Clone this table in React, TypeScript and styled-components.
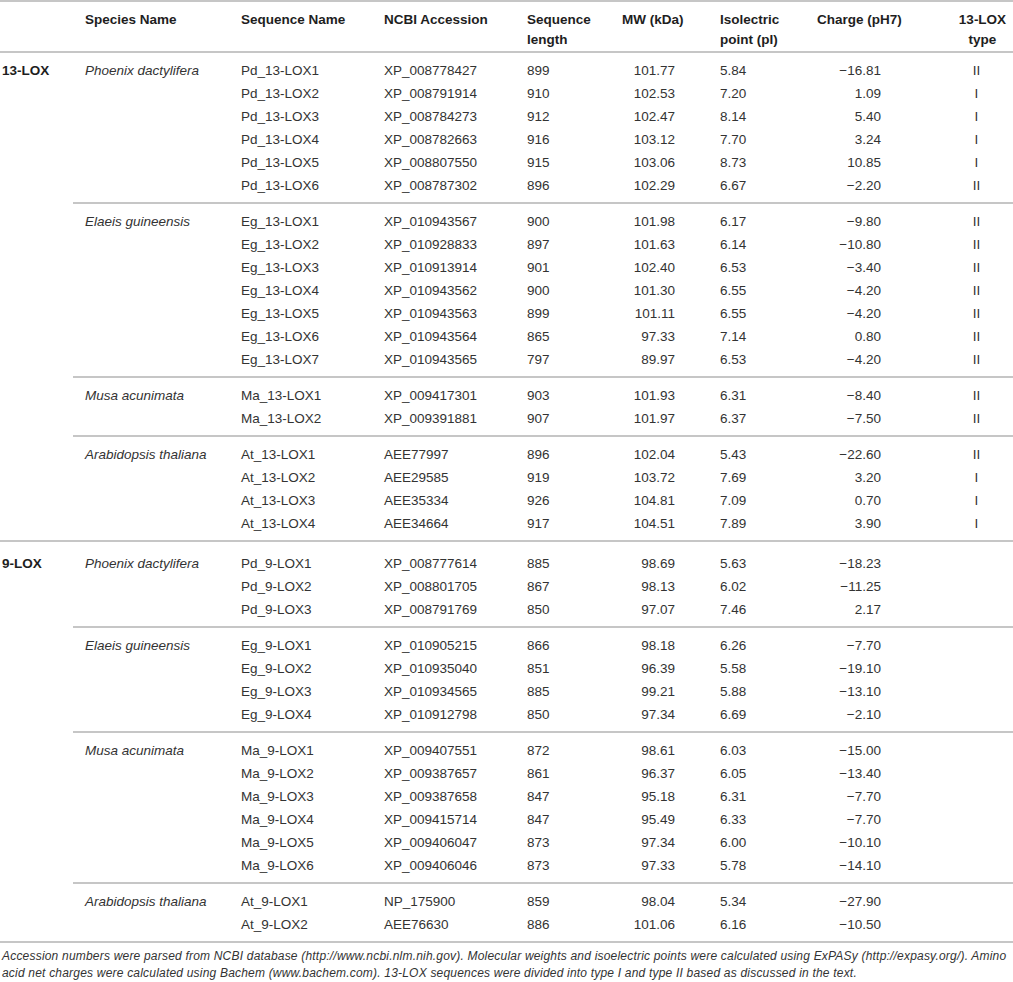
import React from "react";
import styled, { createGlobalStyle } from "styled-components";

const Global = createGlobalStyle`
  html, body { margin: 0; padding: 0; background: #ffffff; }
  body { font-family: "Liberation Sans", Arial, sans-serif; color: #333; }
`;

const COLS = "143px 143px 95px 98px 97px 135px 73px";
const LINE = "#c6c6c6";

const Page = styled.div`
  width: 1013px;
`;

const Table = styled.div`
  border-top: 2px solid ${LINE};
  border-bottom: 2px solid ${LINE};
`;

const HeaderRow = styled.div`
  display: grid;
  grid-template-columns: 73px 156px ${COLS};
  padding: 8px 0 1px;
  border-bottom: 2px solid ${LINE};
`;

const HeadCell = styled.div<{ $center?: boolean; $first?: boolean }>`
  font-weight: bold;
  font-size: 13.5px;
  line-height: 20px;
  color: #1e1e1e;
  padding-left: ${(p) => (p.$first ? "2px" : "12px")};
  text-align: ${(p) => (p.$center ? "center" : "left")};
  white-space: nowrap;
`;

const Section = styled.div<{ $divided?: boolean }>`
  display: grid;
  grid-template-columns: 73px 1fr;
  border-top: ${(p) => (p.$divided ? `2px solid ${LINE}` : "none")};
  padding-top: ${(p) => (p.$divided ? "4px" : "0")};
`;

const Category = styled.div`
  font-weight: bold;
  font-size: 13.5px;
  line-height: 23px;
  color: #1e1e1e;
  padding: 5.5px 0 0 2px;
`;

const Groups = styled.div`
  display: flex;
  flex-direction: column;
`;

const Group = styled.div<{ $divided?: boolean }>`
  display: grid;
  grid-template-columns: 156px 1fr;
  padding: 5.5px 0;
  border-top: ${(p) => (p.$divided ? `2px solid ${LINE}` : "none")};
`;

const Species = styled.div`
  font-style: italic;
  font-size: 13.5px;
  line-height: 23px;
  padding-left: 12px;
  color: #333;
  white-space: nowrap;
`;

const Rows = styled.div`
  display: flex;
  flex-direction: column;
`;

const Row = styled.div`
  display: grid;
  grid-template-columns: ${COLS};
  font-size: 13.5px;
  line-height: 23px;
  color: #333;
`;

const Cell = styled.div<{ $align?: "left" | "right" | "center"; $pr?: number }>`
  padding-left: ${(p) => (p.$align === "left" || !p.$align ? "12px" : "0")};
  padding-right: ${(p) => (p.$pr ? `${p.$pr}px` : "0")};
  text-align: ${(p) => p.$align || "left"};
  white-space: nowrap;
`;

const Footnote = styled.p`
  margin: 0;
  padding: 5px 0 0 2px;
  font-style: italic;
  font-size: 12px;
  letter-spacing: 0.2px;
  line-height: 17px;
  color: #333;
  white-space: nowrap;
`;

type R = [string, string, string, string, string, string, string];
type G = { species: string; rows: R[] };
type S = { label: string; groups: G[] };

const data: S[] = [
  {
    label: "13-LOX",
    groups: [
      {
        species: "Phoenix dactylifera",
        rows: [
          ["Pd_13-LOX1", "XP_008778427", "899", "101.77", "5.84", "−16.81", "II"],
          ["Pd_13-LOX2", "XP_008791914", "910", "102.53", "7.20", "1.09", "I"],
          ["Pd_13-LOX3", "XP_008784273", "912", "102.47", "8.14", "5.40", "I"],
          ["Pd_13-LOX4", "XP_008782663", "916", "103.12", "7.70", "3.24", "I"],
          ["Pd_13-LOX5", "XP_008807550", "915", "103.06", "8.73", "10.85", "I"],
          ["Pd_13-LOX6", "XP_008787302", "896", "102.29", "6.67", "−2.20", "II"],
        ],
      },
      {
        species: "Elaeis guineensis",
        rows: [
          ["Eg_13-LOX1", "XP_010943567", "900", "101.98", "6.17", "−9.80", "II"],
          ["Eg_13-LOX2", "XP_010928833", "897", "101.63", "6.14", "−10.80", "II"],
          ["Eg_13-LOX3", "XP_010913914", "901", "102.40", "6.53", "−3.40", "II"],
          ["Eg_13-LOX4", "XP_010943562", "900", "101.30", "6.55", "−4.20", "II"],
          ["Eg_13-LOX5", "XP_010943563", "899", "101.11", "6.55", "−4.20", "II"],
          ["Eg_13-LOX6", "XP_010943564", "865", "97.33", "7.14", "0.80", "II"],
          ["Eg_13-LOX7", "XP_010943565", "797", "89.97", "6.53", "−4.20", "II"],
        ],
      },
      {
        species: "Musa acunimata",
        rows: [
          ["Ma_13-LOX1", "XP_009417301", "903", "101.93", "6.31", "−8.40", "II"],
          ["Ma_13-LOX2", "XP_009391881", "907", "101.97", "6.37", "−7.50", "II"],
        ],
      },
      {
        species: "Arabidopsis thaliana",
        rows: [
          ["At_13-LOX1", "AEE77997", "896", "102.04", "5.43", "−22.60", "II"],
          ["At_13-LOX2", "AEE29585", "919", "103.72", "7.69", "3.20", "I"],
          ["At_13-LOX3", "AEE35334", "926", "104.81", "7.09", "0.70", "I"],
          ["At_13-LOX4", "AEE34664", "917", "104.51", "7.89", "3.90", "I"],
        ],
      },
    ],
  },
  {
    label: "9-LOX",
    groups: [
      {
        species: "Phoenix dactylifera",
        rows: [
          ["Pd_9-LOX1", "XP_008777614", "885", "98.69", "5.63", "−18.23", ""],
          ["Pd_9-LOX2", "XP_008801705", "867", "98.13", "6.02", "−11.25", ""],
          ["Pd_9-LOX3", "XP_008791769", "850", "97.07", "7.46", "2.17", ""],
        ],
      },
      {
        species: "Elaeis guineensis",
        rows: [
          ["Eg_9-LOX1", "XP_010905215", "866", "98.18", "6.26", "−7.70", ""],
          ["Eg_9-LOX2", "XP_010935040", "851", "96.39", "5.58", "−19.10", ""],
          ["Eg_9-LOX3", "XP_010934565", "885", "99.21", "5.88", "−13.10", ""],
          ["Eg_9-LOX4", "XP_010912798", "850", "97.34", "6.69", "−2.10", ""],
        ],
      },
      {
        species: "Musa acunimata",
        rows: [
          ["Ma_9-LOX1", "XP_009407551", "872", "98.61", "6.03", "−15.00", ""],
          ["Ma_9-LOX2", "XP_009387657", "861", "96.37", "6.05", "−13.40", ""],
          ["Ma_9-LOX3", "XP_009387658", "847", "95.18", "6.31", "−7.70", ""],
          ["Ma_9-LOX4", "XP_009415714", "847", "95.49", "6.33", "−7.70", ""],
          ["Ma_9-LOX5", "XP_009406047", "873", "97.34", "6.00", "−10.10", ""],
          ["Ma_9-LOX6", "XP_009406046", "873", "97.33", "5.78", "−14.10", ""],
        ],
      },
      {
        species: "Arabidopsis thaliana",
        rows: [
          ["At_9-LOX1", "NP_175900", "859", "98.04", "5.34", "−27.90", ""],
          ["At_9-LOX2", "AEE76630", "886", "101.06", "6.16", "−10.50", ""],
        ],
      },
    ],
  },
];

export default function App() {
  return (
    <Page>
      <Global />
      <Table>
        <HeaderRow>
          <HeadCell $first />
          <HeadCell>Species Name</HeadCell>
          <HeadCell>Sequence Name</HeadCell>
          <HeadCell>NCBI Accession</HeadCell>
          <HeadCell>
            Sequence
            <br />
            length
          </HeadCell>
          <HeadCell>MW (kDa)</HeadCell>
          <HeadCell>
            Isolectric
            <br />
            point (pI)
          </HeadCell>
          <HeadCell>Charge (pH7)</HeadCell>
          <HeadCell $center>
            13-LOX
            <br />
            type
          </HeadCell>
        </HeaderRow>
        {data.map((s, si) => (
          <Section key={s.label} $divided={si > 0}>
            <Category>{s.label}</Category>
            <Groups>
              {s.groups.map((g, gi) => (
                <Group key={g.species} $divided={gi > 0}>
                  <Species>{g.species}</Species>
                  <Rows>
                    {g.rows.map((r) => (
                      <Row key={r[0]}>
                        <Cell>{r[0]}</Cell>
                        <Cell>{r[1]}</Cell>
                        <Cell>{r[2]}</Cell>
                        <Cell $align="right" $pr={33}>
                          {r[3]}
                        </Cell>
                        <Cell>{r[4]}</Cell>
                        <Cell $align="right" $pr={59}>
                          {r[5]}
                        </Cell>
                        <Cell $align="center">{r[6]}</Cell>
                      </Row>
                    ))}
                  </Rows>
                </Group>
              ))}
            </Groups>
          </Section>
        ))}
      </Table>
      <Footnote>
        Accession numbers were parsed from NCBI database (http://www.ncbi.nlm.nih.gov). Molecular weights and isoelectric
        points were calculated using ExPASy (http://expasy.org/). Amino
        <br />
        acid net charges were calculated using Bachem (www.bachem.com). 13-LOX sequences were divided into type I and
        type II based as discussed in the text.
      </Footnote>
    </Page>
  );
}
